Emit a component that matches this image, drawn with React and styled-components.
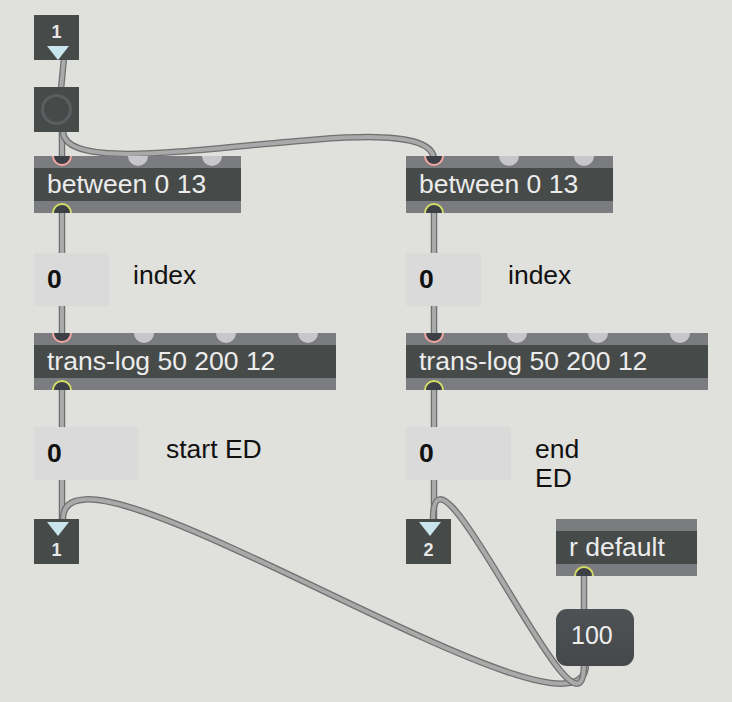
import React from "react";
import styled, { createGlobalStyle } from "styled-components";

const GlobalStyle = createGlobalStyle`
  body {
    margin: 0;
    background: #e0e0dc;
    font-family: "Liberation Sans", Arial, sans-serif;
  }
`;

const Canvas = styled.div`
  position: relative;
  width: 732px;
  height: 702px;
  overflow: hidden;
  background: #e0e0dc;
`;

const Cables = styled.svg`
  position: absolute;
  left: 0;
  top: 0;
`;

// every patcher box sits on the canvas at its own patch coordinates
const Node = styled.div`
  position: absolute;
  left: ${({ $x }) => $x}px;
  top: ${({ $y }) => $y}px;
`;

const ObjectBox = styled(Node)`
  width: ${({ $w }) => $w}px;
  height: 57px;
  display: flex;
  flex-direction: column;
  background: #7b7c80;
`;

const Strip = styled.div`
  position: relative;
  height: 12px;
  overflow: hidden;
`;

const ObjectText = styled.div`
  height: 33px;
  padding-left: 13px;
  background: #464a48;
  color: #ececec;
  font-size: 26.5px;
  line-height: 32px;
  white-space: nowrap;
`;

const Port = styled.span`
  position: absolute;
  left: ${({ $x }) => $x - 10}px;
  top: ${({ $out }) => ($out ? 2 : -10)}px;
  width: 20px;
  height: 20px;
  box-sizing: border-box;
  border-radius: 50%;
  background: ${({ $on }) => ($on ? "#3c4046" : "#c7c7cb")};
  border: ${({ $on, $out }) =>
    $on ? `2.5px solid ${$out ? "#d5dc66" : "#f2a7a2"}` : "none"};
`;

const NumberRow = styled(Node)`
  display: flex;
  align-items: flex-start;
  gap: ${({ $gap }) => $gap}px;
`;

const NumBox = styled.div`
  width: ${({ $w }) => $w}px;
  height: 53px;
  display: flex;
  align-items: center;
  padding-left: 13px;
  box-sizing: border-box;
  background: #dadada;
  color: #111;
  font-size: 26.5px;
  font-weight: bold;
`;

const Comment = styled.div`
  margin-top: 8px;
  color: #111;
  font-size: 26.5px;
  line-height: 29px;
  white-space: pre;
`;

const PortBox = styled(Node)`
  width: 45px;
  height: 45px;
  box-sizing: border-box;
  padding-top: ${({ $outlet }) => ($outlet ? 3 : 3)}px;
  display: flex;
  flex-direction: ${({ $outlet }) => ($outlet ? "column-reverse" : "column")};
  justify-content: flex-end;
  align-items: center;
  gap: ${({ $outlet }) => ($outlet ? 4 : 4)}px;
  background: #464a48;
`;

const PortNumber = styled.span`
  color: #e8e8e8;
  font-size: 18px;
  font-weight: bold;
  line-height: 20px;
`;

const Arrow = styled.span`
  width: 0;
  height: 0;
  margin-left: 2px;
  border-left: 11.5px solid transparent;
  border-right: 11.5px solid transparent;
  border-top: 14px solid #c9e6ee;
`;

const Button = styled(Node)`
  width: 45px;
  height: 45px;
  display: flex;
  align-items: center;
  justify-content: center;
  background: #464a48;
`;

const Ring = styled.span`
  width: 31px;
  height: 31px;
  box-sizing: border-box;
  border-radius: 50%;
  border: 3px solid #5b5e60;
`;

const Message = styled(Node)`
  width: 78px;
  height: 57px;
  box-sizing: border-box;
  padding: 0 0 4px 15px;
  display: flex;
  align-items: center;
  border-radius: 11px;
  background: linear-gradient(#4f5254, #45484a);
  color: #eeeeee;
  font-size: 25px;
`;

const maxCurve = (x1, y1, x2, y2, d) =>
  `M ${x1} ${y1} C ${x1} ${y1 + d}, ${x2} ${y2 - d}, ${x2} ${y2}`;

const cables = [
  "M 64 58 L 61 89",
  "M 62 130 L 62 160",
  maxCurve(63, 131, 434, 160, 65),
  "M 62 211 L 62 253",
  "M 62 305 L 62 337",
  "M 62 388 L 62 427",
  "M 62 480 L 62 521",
  "M 434 211 L 434 253",
  "M 434 305 L 434 337",
  "M 434 388 L 434 427",
  "M 434 480 L 434 521",
  "M 584 574 L 584 610",
  maxCurve(586, 664, 63, 519, 105),
  maxCurve(584, 664, 433, 519, 105),
];

const Obj = ({ x, y, w, text, inlets = [], outlets = [] }) => (
  <ObjectBox $x={x} $y={y} $w={w}>
    <Strip>
      {inlets.map((p, i) => (
        <Port key={i} $x={p} $on={i === 0} />
      ))}
    </Strip>
    <ObjectText>{text}</ObjectText>
    <Strip>
      {outlets.map((p, i) => (
        <Port key={i} $x={p} $on $out />
      ))}
    </Strip>
  </ObjectBox>
);

const Num = ({ x, y, w, gap, label }) => (
  <NumberRow $x={x} $y={y} $gap={gap}>
    <NumBox $w={w}>0</NumBox>
    <Comment>{label}</Comment>
  </NumberRow>
);

export default function App() {
  return (
    <Canvas>
      <GlobalStyle />
      <Cables width="732" height="702">
        {cables.map((d, i) => (
          <g key={i} fill="none" strokeLinecap="round">
            <path d={d} stroke="#6f7071" strokeWidth="6.5" />
            <path d={d} stroke="#a9a9a9" strokeWidth="4" />
          </g>
        ))}
      </Cables>

      <PortBox $x={34} $y={15}>
        <PortNumber>1</PortNumber>
        <Arrow />
      </PortBox>
      <Button $x={34} $y={87}>
        <Ring />
      </Button>

      <Obj x={34} y={156} w={207} text="between 0 13" inlets={[28, 104, 178]} outlets={[28]} />
      <Obj x={406} y={156} w={207} text="between 0 13" inlets={[28, 103, 178]} outlets={[28]} />

      <Num x={34} y={253} w={75} gap={24} label="index" />
      <Num x={406} y={253} w={75} gap={27} label="index" />

      <Obj x={34} y={333} w={302} text="trans-log 50 200 12" inlets={[28, 110, 192, 274]} outlets={[28]} />
      <Obj x={406} y={333} w={302} text="trans-log 50 200 12" inlets={[28, 111, 192, 274]} outlets={[28]} />

      <Num x={34} y={427} w={104} gap={28} label="start ED" />
      <Num x={406} y={427} w={105} gap={24} label={"end\nED"} />

      <PortBox $x={34} $y={519} $outlet>
        <PortNumber>1</PortNumber>
        <Arrow />
      </PortBox>
      <PortBox $x={406} $y={519} $outlet>
        <PortNumber>2</PortNumber>
        <Arrow />
      </PortBox>

      <Obj x={556} y={519} w={141} text="r default" outlets={[28]} />
      <Message $x={556} $y={609}>100</Message>
    </Canvas>
  );
}
